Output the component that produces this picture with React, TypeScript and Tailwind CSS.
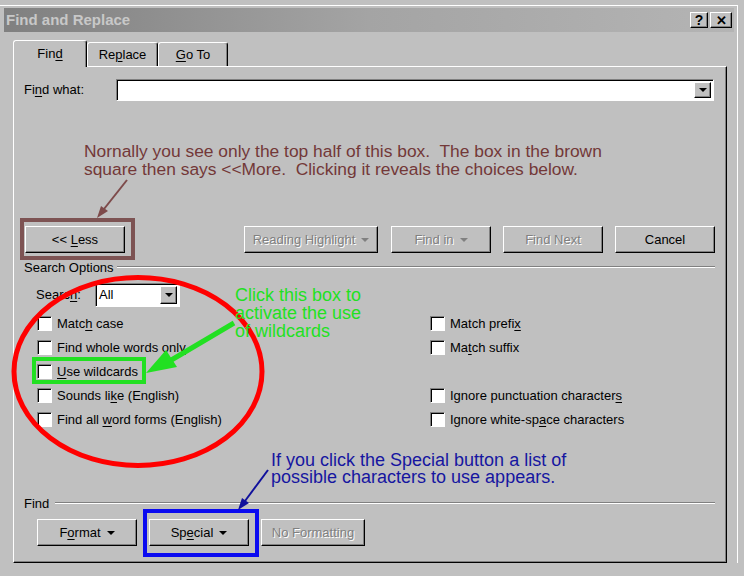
import type { ReactNode } from 'react';

const face = "font-['Liberation_Sans',Arial,sans-serif]";

function U({ children }: { children: ReactNode }) {
  return <span className="underline decoration-1 underline-offset-[2px]">{children}</span>;
}

function Caret({ disabled = false }: { disabled?: boolean }) {
  return (
    <span
      className={`ml-[6px] inline-block h-0 w-0 border-x-[4px] border-t-[4px] border-x-transparent align-middle ${
        disabled ? 'border-t-[#808080]' : 'border-t-black'
      }`}
    />
  );
}

function Btn({
  children,
  className = '',
  disabled = false,
}: {
  children: ReactNode;
  className?: string;
  disabled?: boolean;
}) {
  return (
    <button
      type="button"
      className={`flex h-[27px] items-center justify-center border border-t-white border-l-white border-r-black border-b-black bg-[#c0c0c0] text-[13px] shadow-[inset_-1px_-1px_0_#808080] ${
        disabled ? 'text-[#808080] [text-shadow:1px_1px_0_#fff]' : 'text-black'
      } ${className}`}
    >
      <span>{children}</span>
    </button>
  );
}

function DropBtn() {
  return (
    <span className="flex h-full w-[17px] items-center justify-center border border-t-white border-l-white border-r-black border-b-black bg-[#c0c0c0] shadow-[inset_-1px_-1px_0_#808080]">
      <span className="inline-block h-0 w-0 border-x-[4px] border-t-[4px] border-x-transparent border-t-black" />
    </span>
  );
}

function Check({ children }: { children?: ReactNode }) {
  if (!children) return <div className="h-[15px]" />;
  return (
    <div className="flex h-[15px] items-center gap-[5px]">
      <span className="h-[15px] w-[15px] border border-t-[#808080] border-l-[#808080] border-b-white border-r-white bg-white shadow-[inset_1px_1px_0_#000]" />
      <span className="text-[13px] leading-none text-black">{children}</span>
    </div>
  );
}

function Groove({ label, gap }: { label: string; gap: string }) {
  return (
    <div className={`flex h-[14px] items-center ${gap}`}>
      <span className="text-[13px] leading-none">{label}</span>
      <span className="flex-1 border-t border-b border-t-[#808080] border-b-white" />
    </div>
  );
}

export default function App() {
  return (
    <div className={`relative h-[576px] w-[744px] overflow-hidden bg-[#c0c0c0] pt-[5px] text-black ${face}`}>
      <div className="w-[738px] border-t border-r border-white pt-[2px]">
        {/* title bar */}
        <div className="ml-[4px] flex h-[24px] w-[730px] items-center justify-between bg-gradient-to-r from-[#808080] via-[#a4a4a4] to-[#b4b4b4] pl-[2px] pr-[2px]">
          <span className="text-[15px] font-bold text-[#c8c8c8]">Find and Replace</span>
          <div className="flex gap-[2px]">
            <span className="flex h-[16px] w-[18px] items-center justify-center border border-t-white border-l-white border-r-black border-b-black bg-[#c0c0c0] text-[14px] font-bold leading-none shadow-[inset_-1px_-1px_0_#808080]">
              ?
            </span>
            <span className="flex h-[16px] w-[22px] items-center justify-center border border-t-white border-l-white border-r-black border-b-black bg-[#c0c0c0] text-[13px] font-bold leading-none shadow-[inset_-1px_-1px_0_#808080]">
              ✕
            </span>
          </div>
        </div>

        <div className="pl-[13px] pt-[8px]">
          {/* tabs */}
          <div className="flex h-[26px] items-end">
            <div className="relative z-10 -mb-[1px] flex h-[27px] w-[74px] items-center justify-center rounded-t-[3px] border-t border-l border-r border-t-white border-l-white border-r-black bg-[#c0c0c0] text-[13px] shadow-[inset_-1px_0_0_#808080]">
              <span>
                Fin<U>d</U>
              </span>
            </div>
            <div className="flex h-[24px] w-[71px] items-center justify-center rounded-t-[3px] border-t border-l border-r border-t-white border-l-white border-r-black text-[13px] shadow-[inset_-1px_0_0_#808080]">
              <span>
                Re<U>p</U>lace
              </span>
            </div>
            <div className="flex h-[24px] w-[70px] items-center justify-center rounded-t-[3px] border-t border-l border-r border-t-white border-l-white border-r-black text-[13px] shadow-[inset_-1px_0_0_#808080]">
              <span>
                <U>G</U>o To
              </span>
            </div>
          </div>

          {/* panel */}
          <div className="flex w-[714px] flex-col border border-t-white border-l-white border-r-black border-b-black pl-[10px] pr-[11px] pt-[12px] pb-[16px] shadow-[inset_-1px_-1px_0_#808080]">
            <div className="flex h-[22px] items-center">
              <span className="w-[92px] text-[13px]">
                Fi<U>n</U>d what:
              </span>
              <div className="mr-[1px] flex h-[22px] flex-1 justify-end border border-t-[#808080] border-l-[#808080] border-b-white border-r-white bg-white p-[1px] shadow-[inset_1px_1px_0_#000]">
                <div className="py-[1px] pr-[1px]">
                  <DropBtn />
                </div>
              </div>
            </div>

            <div className="mt-[125px] flex">
              <Btn className="ml-[1px] w-[100px]">
                &lt;&lt; <U>L</U>ess
              </Btn>
              <Btn disabled className="ml-[119px] w-[134px]">
                Reading Highlight
                <Caret disabled />
              </Btn>
              <Btn disabled className="ml-[13px] w-[100px]">
                Find in
                <Caret disabled />
              </Btn>
              <Btn disabled className="ml-[12px] w-[100px]">
                Find Next
              </Btn>
              <Btn className="ml-[12px] w-[100px]">Cancel</Btn>
            </div>

            <div className="mt-[7px]">
              <Groove label="Search Options" gap="gap-[3px]" />
            </div>

            <div className="mt-[9px] flex h-[24px] items-center pl-[12px]">
              <span className="w-[59px] text-[13px]">
                Searc<U>h</U>:
              </span>
              <div className="flex h-[24px] w-[85px] justify-between border border-t-[#808080] border-l-[#808080] border-b-white border-r-white bg-white p-[1px] shadow-[inset_1px_1px_0_#000]">
                <span className="pl-[2px] text-[13px] leading-[20px]">All</span>
                <div className="py-[1px] pr-[1px]">
                  <DropBtn />
                </div>
              </div>
            </div>

            <div className="mt-[9px] grid grid-cols-[393px_1fr] pl-[13px]">
              <div className="flex flex-col gap-[9px]">
                <Check>
                  Matc<U>h</U> case
                </Check>
                <Check>
                  Find whole words onl<U>y</U>
                </Check>
                <Check>
                  <U>U</U>se wildcards
                </Check>
                <Check>
                  Sounds li<U>k</U>e (English)
                </Check>
                <Check>
                  Find all <U>w</U>ord forms (English)
                </Check>
              </div>
              <div className="flex flex-col gap-[9px]">
                <Check>
                  Match prefi<U>x</U>
                </Check>
                <Check>
                  Ma<U>t</U>ch suffix
                </Check>
                <Check />
                <Check>
                  Ignore punctuation character<U>s</U>
                </Check>
                <Check>
                  Ignore white-sp<U>a</U>ce characters
                </Check>
              </div>
            </div>

            <div className="mt-[69px]">
              <Groove label="Find" gap="gap-[6px]" />
            </div>

            <div className="mt-[9px] flex pl-[13px]">
              <Btn className="w-[100px]">
                F<U>o</U>rmat
                <Caret />
              </Btn>
              <Btn className="ml-[12px] w-[100px]">
                Sp<U>e</U>cial
                <Caret />
              </Btn>
              <Btn disabled className="ml-[12px] w-[104px]">
                No Formatting
              </Btn>
            </div>
          </div>
        </div>
      </div>

      {/* annotations drawn over the dialog */}
      <svg className="pointer-events-none absolute inset-0" width="744" height="576" viewBox="0 0 744 576">
        <rect x="22" y="220" width="111" height="38" fill="none" stroke="#7d5353" strokeWidth="4" />
        <line x1="127" y1="180" x2="104" y2="209" stroke="#7d4a4a" strokeWidth="2" />
        <polygon points="97,218 108,211 101,206" fill="#7d4a4a" />

        <ellipse cx="138" cy="371.5" rx="124" ry="94" fill="none" stroke="#ff0000" strokeWidth="5" />

        <rect x="34" y="359" width="110" height="23" fill="none" stroke="#22e022" strokeWidth="4" />
        <line x1="234" y1="323" x2="168" y2="362" stroke="#22e022" strokeWidth="5" />
        <polygon points="146,373 177,367 166,350" fill="#22e022" />

        <rect x="145" y="511" width="112" height="44" fill="none" stroke="#0a0af0" strokeWidth="4" />
        <line x1="268" y1="470" x2="245" y2="501" stroke="#10109c" strokeWidth="2" />
        <polygon points="238,510 249,503 242,498" fill="#10109c" />
      </svg>

      <div className="pointer-events-none absolute left-[84px] top-[142px] whitespace-pre text-[17.4px] leading-[18px] text-[#733838]">
        {'Nornally you see only the top half of this box.  The box in the brown\nsquare then says <<More.  Clicking it reveals the choices below.'}
      </div>
      <div className="pointer-events-none absolute left-[235px] top-[286px] whitespace-pre text-[18px] leading-[18px] text-[#22e022]">
        {'Click this box to\nactivate the use\nof wildcards'}
      </div>
      <div className="pointer-events-none absolute left-[271px] top-[452px] whitespace-pre text-[18px] leading-[17px] text-[#1616a0]">
        {'If you click the Special button a list of\npossible characters to use appears.'}
      </div>
    </div>
  );
}
